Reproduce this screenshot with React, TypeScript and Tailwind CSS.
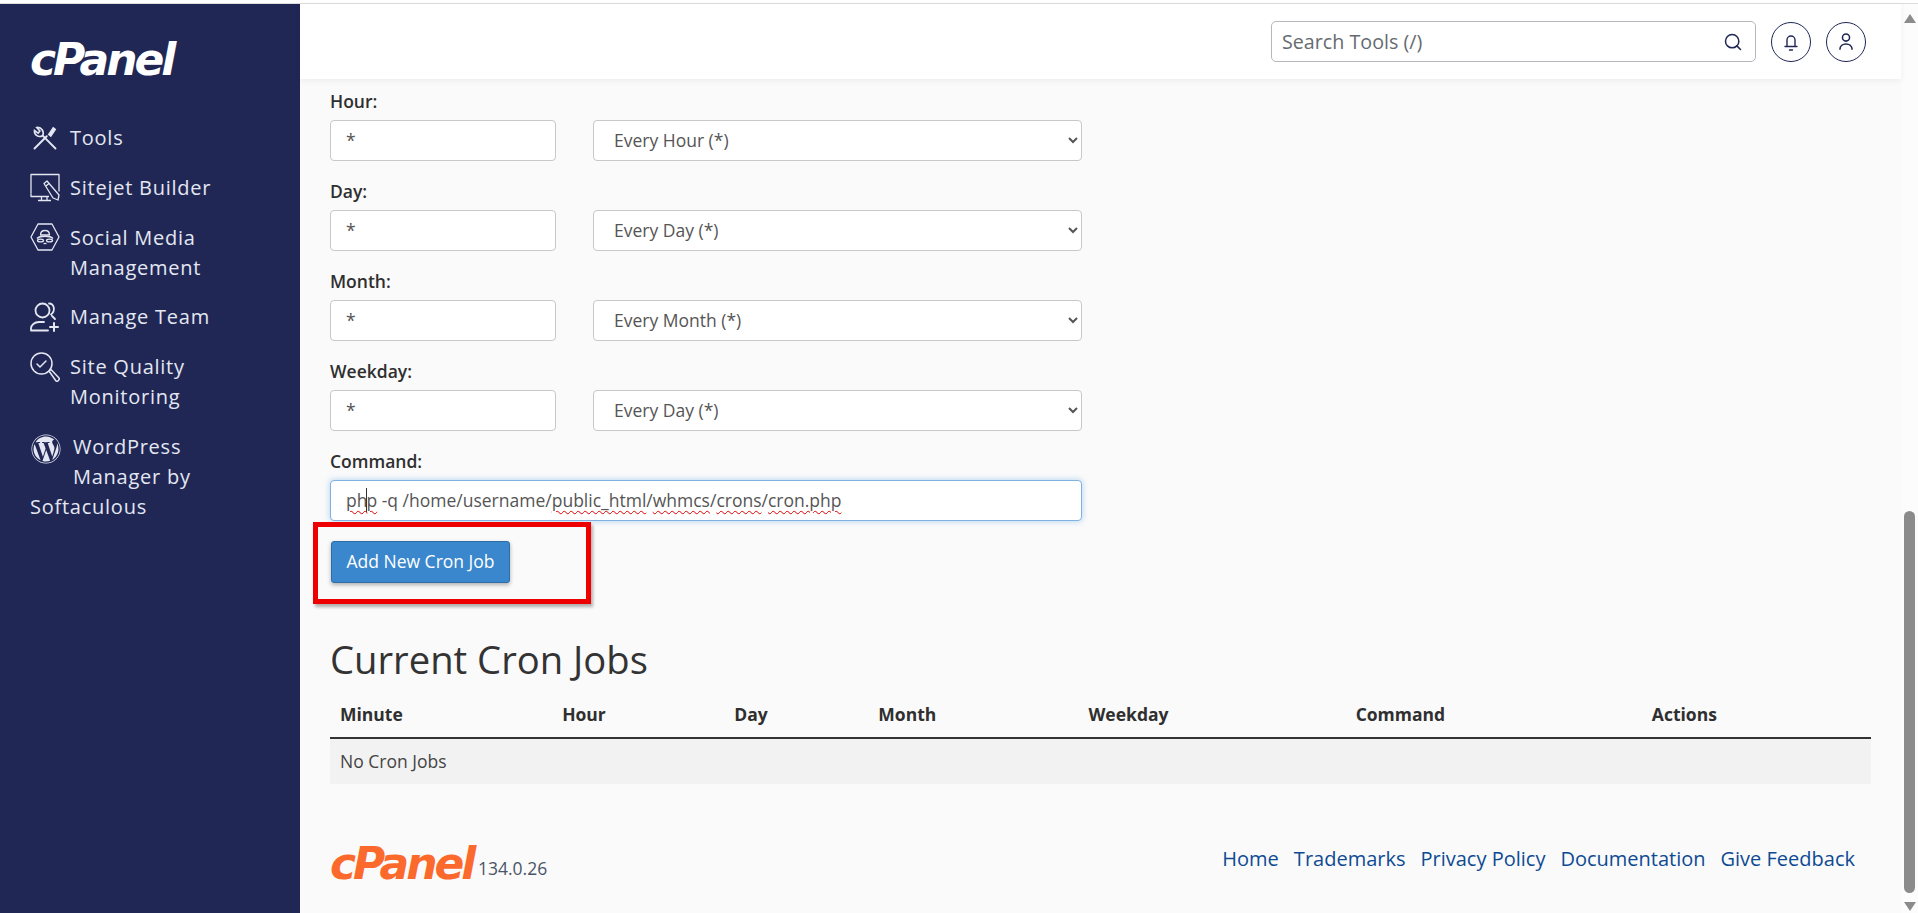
import { Search } from 'lucide-react';
import { FaWordpress } from 'react-icons/fa';

const fields = [
  { label: 'Hour:', option: 'Every Hour (*)' },
  { label: 'Day:', option: 'Every Day (*)' },
  { label: 'Month:', option: 'Every Month (*)' },
  { label: 'Weekday:', option: 'Every Day (*)' },
];

const columns = ['Minute', 'Hour', 'Day', 'Month', 'Weekday', 'Command', 'Actions'];
const columnWidths = [222, 172, 144, 210, 267, 296, 229];
const footerLinks = ['Home', 'Trademarks', 'Privacy Policy', 'Documentation', 'Give Feedback'];

const ToolsIcon = () => (
  <svg viewBox="0 0 24 24" className="h-7 w-7 shrink-0" fill="none" stroke="currentColor" strokeWidth="1.6" strokeLinecap="round">
    <path d="M21 21 10 10" />
    <path d="M10 10C11.500 6.500 9 2.500 5 3l2.600 3-1.500 1.800L3 5.500C2.500 9.500 6.500 12 10 10Z" strokeWidth="1.400" />
    <path d="M3 21 13.500 10.500" />
    <path d="m15 9 4-6 2 1.600-4 6Z" fill="currentColor" strokeWidth="1" />
  </svg>
);

const SitejetIcon = () => (
  <svg viewBox="0 0 30 30" className="h-[30px] w-[30px] shrink-0" fill="none" stroke="currentColor" strokeWidth="1.300" strokeLinejoin="round">
    <path d="M1 20.500V1.500h28v17" />
    <path d="M1 20.500v3h18" />
    <path d="M11.500 24v3M17 24v3M8 27.500h13" />
    <path d="m14 10.500 3-2.500 12 14-1 5-5-2Z" fill="#202755" />
    <path d="m16 13 3-2.500" />
  </svg>
);

const SocialIcon = () => (
  <svg viewBox="0 0 30 28" className="h-[28px] w-[30px] shrink-0" fill="none" stroke="currentColor" strokeWidth="1.300" strokeLinejoin="round">
    <path d="M1 14 8 1h14l7 13-7 13H8Z" />
    <path d="M10.500 12c0-6 9-6 9 0Z" />
    <path d="M7 15.500c3-3 13-3 16 0" />
    <ellipse cx="10.500" cy="17.500" rx="3" ry="1.400" />
    <ellipse cx="19.500" cy="17.500" rx="3" ry="1.400" />
    <path d="M13.500 20.500h3" />
  </svg>
);

const TeamIcon = () => (
  <svg viewBox="0 0 30 30" className="h-[30px] w-[30px] shrink-0" fill="none" stroke="currentColor" strokeWidth="1.800" strokeLinecap="round">
    <circle cx="12.500" cy="8.500" r="7" />
    <path d="M19 1.500c5 0 7 7 2 11M22 14l3 3" />
    <path d="M1 28.500h17M1 28.500v-2c0-3.500 3.500-6.500 8-6.500h5" />
    <path d="M24 21v8M20 25h8" strokeWidth="2" />
  </svg>
);

const QualityIcon = () => (
  <svg viewBox="0 0 30 30" className="h-[30px] w-[30px] shrink-0" fill="none" stroke="currentColor" strokeWidth="1.500" strokeLinecap="round" strokeLinejoin="round">
    <circle cx="11.500" cy="11.500" r="10.500" />
    <path d="m7 12 3 3 6-6" />
    <path d="m19 19 2-1.500 8 8.500c1 1.500-1.500 4-3 3Z" />
  </svg>
);

const CpanelLogo = ({ color }: { color: string }) => (
  <span className={`block h-[32px] w-[148px] whitespace-nowrap font-['DejaVu_Sans',sans-serif] text-[44px] leading-[32px] font-bold italic tracking-[-3px] ${color}`}>
    cPanel
  </span>
);

function Sidebar() {
  return (
    <aside className="w-[300px] shrink-0 bg-[#202755] pr-4 pl-[30px] text-[20px] leading-[30px] tracking-[0.75px] text-[#e4e7f2]">
      <div className="pt-[40px]">
        <CpanelLogo color="text-white" />
      </div>
      <nav className="mt-[47px] flex flex-col">
        <a className="flex h-[30px] items-center gap-[11px] pl-px">
          <ToolsIcon />
          Tools
        </a>
        <a className="mt-[20px] flex h-[30px] items-center gap-[10px]">
          <SitejetIcon />
          Sitejet Builder
        </a>
        <a className="mt-[20px] flex items-start gap-[10px]">
          <SocialIcon />
          <span>
            Social Media
            <br />
            Management
          </span>
        </a>
        <a className="mt-[19px] flex h-[30px] items-center gap-[10px]">
          <TeamIcon />
          Manage Team
        </a>
        <a className="mt-[20px] flex items-start gap-[10px]">
          <QualityIcon />
          <span>
            Site Quality
            <br />
            Monitoring
          </span>
        </a>
        <a className="mt-[20px] block">
          <FaWordpress className="float-left my-[2px] mr-[12px] ml-px text-[30px]" />
          WordPress
          <br />
          Manager by
          <br />
          Softaculous
        </a>
      </nav>
    </aside>
  );
}

function TopBar() {
  return (
    <header className="relative z-10 flex h-[75px] shrink-0 items-center justify-end bg-white pr-[35px] shadow-[0_2px_6px_rgba(0,0,0,0.06)]">
      <div className="flex h-[41px] w-[485px] items-center rounded-[5px] border border-[#b4b8bc] pr-[12px] pl-[10px]">
        <input
          placeholder="Search Tools (/)"
          className="min-w-0 flex-1 bg-transparent text-[19.700px] outline-none placeholder:text-[#666b70]"
        />
        <Search size={20} strokeWidth={1.800} className="text-[#202755]" />
      </div>
      <button className="ml-[15px] flex h-[40px] w-[40px] items-center justify-center rounded-full border border-[#202755] text-[#202755]">
        <svg viewBox="0 0 20 20" className="h-5 w-5" fill="none" stroke="currentColor" strokeWidth="1.400" strokeLinecap="round">
          <path d="M6 14.500V8a4 4 0 0 1 8 0v6.500M4 14.500h12M8.500 18h3" />
        </svg>
      </button>
      <button className="ml-[15px] flex h-[40px] w-[40px] items-center justify-center rounded-full border border-[#202755] text-[#202755]">
        <svg viewBox="0 0 16 18" className="h-[20px] w-[18px]" fill="none" stroke="currentColor" strokeWidth="1.400">
          <circle cx="8" cy="5" r="3.200" />
          <path d="M2.500 16c0-7 11-7 11 0" />
        </svg>
      </button>
    </header>
  );
}

function CronForm() {
  return (
    <form className="flex flex-col">
      {fields.map((field) => (
        <div key={field.label} className="mb-[20px]">
          <label className="mb-[8px] -mt-px block h-[22px] leading-[22px] font-semibold text-[#2f2f2f]">{field.label}</label>
          <div className="flex items-center">
            <input
              defaultValue="*"
              className="h-[41px] w-[226px] rounded-[4px] border border-[#c8c8c8] bg-white px-[15px] pb-[2px] text-[#555] outline-none"
            />
            <select className="ml-[37px] h-[41px] w-[489px] rounded-[4px] border border-[#c8c8c8] bg-white pb-[2px] pl-[16px] text-[#555] outline-none">
              <option>{field.option}</option>
            </select>
          </div>
        </div>
      ))}
      <label className="mb-[8px] -mt-px block h-[22px] leading-[22px] font-semibold text-[#2f2f2f]">Command:</label>
      <div className="flex h-[41px] w-[752px] items-center rounded-[4px] border border-[#7fb2e0] bg-white px-[15px] whitespace-nowrap text-[#555] shadow-[0_0_6px_rgba(82,160,230,0.45)]">
        <span className="underline decoration-[#e00000] decoration-wavy decoration-1 underline-offset-3">
          ph
          <span className="-mx-px border-l border-[#333]" />
          p
        </span>
        <span>&nbsp;-q /home/username/</span>
        <span className="underline decoration-[#e00000] decoration-wavy decoration-1 underline-offset-3">public_html</span>
        /
        <span className="underline decoration-[#e00000] decoration-wavy decoration-1 underline-offset-3">whmcs</span>
        /
        <span className="underline decoration-[#e00000] decoration-wavy decoration-1 underline-offset-3">crons</span>
        /
        <span className="underline decoration-[#e00000] decoration-wavy decoration-1 underline-offset-3">cron.php</span>
      </div>
      <div className="relative mt-[20px] ml-px w-fit">
        <button
          type="button"
          className="h-[42px] w-[179px] rounded-[3px] border border-[#2d6da8] bg-[#3a87cd] pb-[2px] text-white shadow-[0_2px_4px_rgba(0,0,0,0.3)]"
        >
          Add New Cron Job
        </button>
        <div className="absolute -top-[19px] -left-[18px] h-[82px] w-[278px] border-[5px] border-[#ee0000] shadow-[2px_3px_3px_rgba(0,0,0,0.3)]" />
      </div>
    </form>
  );
}

function CronTable() {
  return (
    <section className="mt-[54px]">
      <h2 className="text-[38.200px] leading-[44px] text-[#333]">Current Cron Jobs</h2>
      <table className="mt-[9px] w-full table-fixed border-collapse">
        <colgroup>
          {columnWidths.map((width, i) => (
            <col key={i} style={{ width }} />
          ))}
        </colgroup>
        <thead>
          <tr className="h-[48px] border-b-2 border-[#333]">
            {columns.map((column) => (
              <th key={column} className="pt-[2px] pl-[10px] text-left font-bold text-[#2f2f2f]">
                {column}
              </th>
            ))}
          </tr>
        </thead>
        <tbody>
          <tr className="h-[46px] bg-[#f2f2f2]">
            <td colSpan={7} className="pl-[10px] text-[#444]">
              No Cron Jobs
            </td>
          </tr>
        </tbody>
      </table>
    </section>
  );
}

function Footer() {
  return (
    <footer className="mt-[62px] flex items-start justify-between pr-[16px]">
      <div className="mt-[2px] flex items-end">
        <CpanelLogo color="text-[#fb6a2c]" />
        <span className="-mb-px text-[#4a5568]">134.0.26</span>
      </div>
      <div className="mt-px flex gap-[15px] text-[20px] leading-[24px] text-[#0e4a94]">
        {footerLinks.map((link) => (
          <a key={link}>{link}</a>
        ))}
      </div>
    </footer>
  );
}

function Scrollbar() {
  return (
    <div className="flex w-[17px] shrink-0 flex-col items-center bg-[#fcfcfc] pt-[10px] pb-[2px]">
      <div className="h-0 w-0 border-x-[6px] border-b-[9px] border-x-transparent border-b-[#8b8b8b]" />
      <div className="mt-[488px] h-[382px] w-[11px] rounded-[6px] bg-[#8b8b8b]" />
      <div className="mt-[9px] h-0 w-0 border-x-[6px] border-t-[9px] border-x-transparent border-t-[#8b8b8b]" />
    </div>
  );
}

export default function App() {
  return (
    <div className="flex h-[913px] w-[1918px] flex-col overflow-hidden bg-white font-['Open_Sans',sans-serif] text-[17.500px]">
      <div className="h-[4px] shrink-0 border-b border-[#dcdcdc] bg-white" />
      <div className="flex min-h-0 flex-1">
        <Sidebar />
        <main className="flex min-w-0 flex-1 flex-col bg-[#fafafa]">
          <TopBar />
          <div className="pt-[12px] pr-[30px] pl-[30px]">
            <CronForm />
            <CronTable />
            <Footer />
          </div>
        </main>
        <Scrollbar />
      </div>
    </div>
  );
}
